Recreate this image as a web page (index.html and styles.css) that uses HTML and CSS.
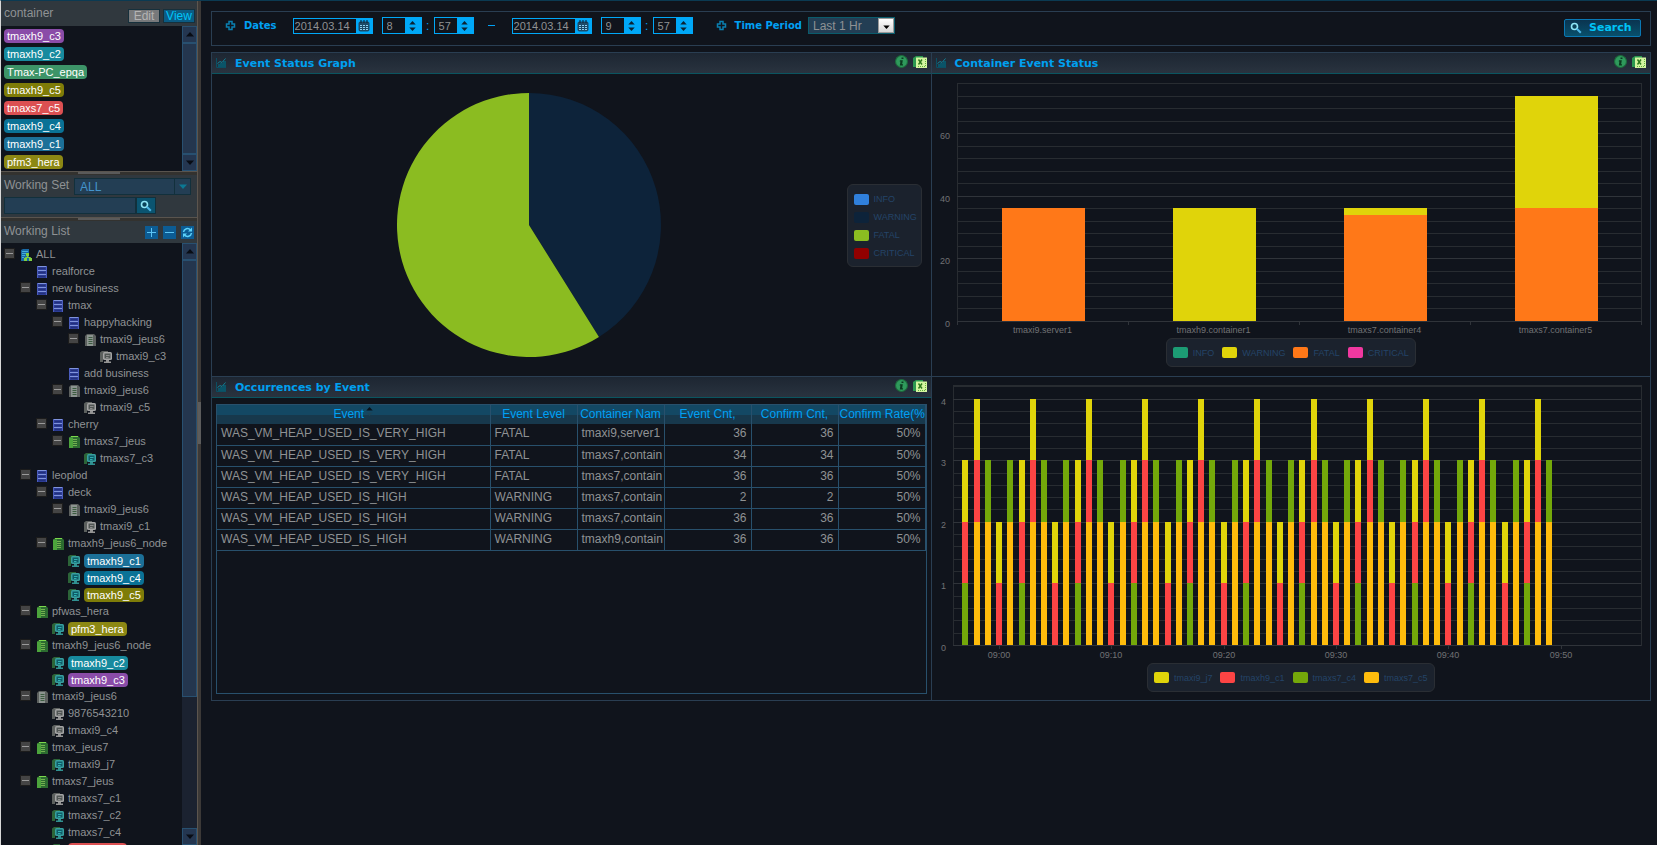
FILE: index.html
```html
<!DOCTYPE html>
<html lang="en">
<head>
<meta charset="UTF-8">
<title>Event Status</title>
<meta name="viewport" content="width=device-width, initial-scale=1.0">
<link rel="stylesheet" href="styles.css">
</head>
<body>

<svg class="sprite" aria-hidden="true">
    <symbol id="i-plus" viewBox="0 0 11 11"><path d="M4 1.500h3V4h2.500v3H7v2.500H4V7H1.500V4H4z" fill="none" stroke="#0a7fb0" stroke-width="1.500"/></symbol>
    <symbol id="i-cal" viewBox="0 0 12 12"><rect x="0.500" y="1.500" width="11" height="10" rx="2" fill="#1c4a68"/><path d="M3 0v3M6 0v3M9 0v3" stroke="#0b1f30"/><path d="M2 5h2v1H2zM5 5h2v1H5zM8 5h2v1H8zM2 7h2v1H2zM5 7h2v1H5zM8 7h2v1H8zM2 9h2v1H2zM5 9h2v1H5zM8 9h2v1H8z" fill="#8fd0f0"/></symbol>
    <symbol id="i-up" viewBox="0 0 8 5"><path d="M4 0l4 4.500H0z" fill="currentColor"/></symbol>
    <symbol id="i-down" viewBox="0 0 8 5"><path d="M0 .5h8L4 5z" fill="currentColor"/></symbol>
    <symbol id="i-chart" viewBox="0 0 10 10"><path d="M.5 0v9.500H10" fill="none" stroke="#0b4f63"/><path d="M2 6h2v3H2zM4 5h3v4H4zM7 3h3v6H7z" fill="#0a5468"/><path d="M1.500 5.500l2.500-2 2 1L9.500.5" fill="none" stroke="#128096"/></symbol>
    <symbol id="i-info" viewBox="0 0 12 12"><circle cx="6" cy="6" r="5.500" fill="#2f9a5c" stroke="#1d6a3c"/><path d="M6 2.200h1.800v1.600H6zM4.600 4.800h2.600L6.600 8.600h.8v1H4.400l.6-3.600h-.7z" fill="#0b3a20"/></symbol>
    <symbol id="i-xls" viewBox="0 0 14 12"><path d="M0 2l3-2h7v2H3v9H0z" fill="#2c9850"/><rect x="3" y="1.500" width="11" height="10.500" fill="#d4f5a0"/><path d="M5.500 3.500l3.500 5M9 3.500l-3.500 5" stroke="#2c7a1c" stroke-width="1.400"/><path d="M12.500 3v8M5 10.500h8" stroke="#5fae3c" stroke-dasharray="1 1"/></symbol>
    <symbol id="i-lens" viewBox="0 0 12 12"><circle cx="4.500" cy="4.500" r="3" fill="#0a4158" stroke="#8fe6f6" stroke-width="1.600"/><path d="M6.800 6.800l4 4" stroke="#4cb4e4" stroke-width="2"/></symbol>
    <symbol id="i-add" viewBox="0 0 13 13"><path d="M6.500 2v9M2 6.500h9" stroke="#5cc4f4"/></symbol>
    <symbol id="i-sub" viewBox="0 0 13 13"><path d="M2 6.500h9" stroke="#5cc4f4"/></symbol>
    <symbol id="i-sync" viewBox="0 0 13 13"><path d="M2.500 6a4 4 0 0 1 7-2M10.500 7a4 4 0 0 1-7 2" fill="none" stroke="#5cd0f8" stroke-width="1.600"/><path d="M11 1.500v4H7zM2 11.500v-4h4z" fill="#5cd0f8"/></symbol>
    <symbol id="i-all" viewBox="0 0 12 12"><path d="M1 1l2-1h6v12H1z" fill="#1868a4"/><path d="M2 2.500h6M2 4.500h4M2 6.500h3M2 8.500h2" stroke="#43aeda"/><path d="M6 4h3v3H6zM4 9h3v3H4zM9 9h3v3H9z" fill="#7fd040"/><path d="M7.500 7v2M5.500 9V8.500h5V9" fill="none" stroke="#7fd040"/></symbol>
    <symbol id="i-biz" viewBox="0 0 12 12"><rect x="1" y="0" width="10" height="12" rx="1" fill="#2c3c94"/><path d="M1.500 0v12M10.500 0v12" stroke="#4a5cbc"/><path d="M3 2.500h6M3 6.500h6M3 10.500h6" stroke="#22307c"/><path d="M2 .5h8M2 4.500h8M2 8.500h8" stroke="#8094dc"/></symbol>
    <symbol id="i-srv-off" viewBox="0 0 12 12"><path d="M1 2l2-2h7l2 2v10H1z" fill="#5c605e"/><rect x="3" y="1" width="6" height="11" fill="#8c9490"/><path d="M4.500 3.500h4M4.500 5.500h4M4.500 7.500h4M4.500 9.500h4" stroke="#3c5c40"/></symbol>
    <symbol id="i-srv-on" viewBox="0 0 12 12"><path d="M1 2l2-2h7l2 2v10H1z" fill="#2c6c30"/><rect x="1" y="1.500" width="4" height="10.500" fill="#4ca43c"/><path d="M3 .5h7" stroke="#7cd84c"/><path d="M5 3.500h4M5 5.500h4M5 7.500h4M5 9.500h4" stroke="#74b050"/></symbol>
    <symbol id="i-node-off" viewBox="0 0 12 12"><path d="M0 1.500L2 0h6v2H3v9H0z" fill="#5c605e"/><rect x="3" y="1" width="9" height="8" rx="1.500" fill="#a4a4a4"/><rect x="4.500" y="2.500" width="6" height="5" fill="#505654"/><path d="M6 4.500h3.500M6 6.500h2.500" stroke="#8c8c8c"/><path d="M6 9h3v1.500H6zM4 10.500h7V12H4z" fill="#949494"/></symbol>
    <symbol id="i-node-on" viewBox="0 0 12 12"><path d="M0 1.500L2 0h6v2H3v9H0z" fill="#2c6438"/><rect x="3" y="1" width="9" height="8" rx="1.500" fill="#38a0a0"/><rect x="4.500" y="2.500" width="6" height="5" fill="#0f5c68"/><path d="M6 4.500h3.500M6 6.500h2.500" stroke="#30b0b0"/><path d="M6 9h3v1.500H6zM4 10.500h7V12H4z" fill="#309090"/></symbol>
</svg>

<aside class="sidebar">
    <div class="side-head">
        <span>container</span>
        <div class="head-btns">
            <button class="tab-btn edit">Edit</button>
            <button class="tab-btn view">View</button>
        </div>
    </div>
    <div class="side-list">
        <ul class="containers">
            <li><span class="pill purple">tmaxh9_c3</span></li>
            <li><span class="pill teal">tmaxh9_c2</span></li>
            <li><span class="pill green">Tmax-PC_epqa</span></li>
            <li><span class="pill olive">tmaxh9_c5</span></li>
            <li><span class="pill red">tmaxs7_c5</span></li>
            <li><span class="pill blue">tmaxh9_c4</span></li>
            <li><span class="pill steel">tmaxh9_c1</span></li>
            <li><span class="pill moss">pfm3_hera</span></li>
        </ul>
        <div class="scroll">
            <button aria-label="Scroll up"><svg><use href="#i-up"/></svg></button>
            <div class="thumb full"></div>
            <button aria-label="Scroll down"><svg><use href="#i-down"/></svg></button>
        </div>
    </div>
    <div class="split-h"><i></i></div>
    <div class="side-set">
        <div class="set-row">
            <label for="workingSet">Working Set</label>
            <div class="set-select">
                <select id="workingSet"><option>ALL</option></select>
                <span class="set-arrow"><svg><use href="#i-down"/></svg></span>
            </div>
        </div>
        <div class="set-find">
            <input type="text" id="findText" aria-label="Find">
            <button aria-label="Find"><svg><use href="#i-lens"/></svg></button>
        </div>
    </div>
    <div class="split-h"><i></i></div>
    <div class="side-head list-head">
        <span>Working List</span>
        <div class="head-btns tools">
            <button aria-label="Expand all"><svg><use href="#i-add"/></svg></button>
            <button aria-label="Collapse all"><svg><use href="#i-sub"/></svg></button>
            <button aria-label="Refresh"><svg><use href="#i-sync"/></svg></button>
        </div>
    </div>
    <div class="side-tree">
        <ul class="tree" id="tree"></ul>
        <div class="scroll">
            <button aria-label="Scroll up"><svg><use href="#i-up"/></svg></button>
            <div class="track"><div class="thumb"></div></div>
            <button aria-label="Scroll down"><svg><use href="#i-down"/></svg></button>
        </div>
    </div>
</aside>
<div class="split-v"><i></i></div>

<main class="main">
    <form class="filter" onsubmit="return false">
        <div class="filter-group">
            <svg class="plus"><use href="#i-plus"/></svg>
            <label class="filter-label" for="dateFrom">Dates</label>
            <div class="range">
                <div class="date"><input type="text" id="dateFrom" value="2014.03.14"><button type="button" aria-label="Pick start date"><svg><use href="#i-cal"/></svg></button></div>
                <div class="time">
                    <div class="spin"><input type="text" aria-label="Start hour" value="8"><button type="button" aria-label="Change start hour"><svg><use href="#i-up"/></svg><svg><use href="#i-down"/></svg></button></div>
                    <span>:</span>
                    <div class="spin"><input type="text" aria-label="Start minute" value="57"><button type="button" aria-label="Change start minute"><svg><use href="#i-up"/></svg><svg><use href="#i-down"/></svg></button></div>
                </div>
            </div>
            <span class="dash"></span>
            <div class="range">
                <div class="date"><input type="text" aria-label="End date" value="2014.03.14"><button type="button" aria-label="Pick end date"><svg><use href="#i-cal"/></svg></button></div>
                <div class="time">
                    <div class="spin"><input type="text" aria-label="End hour" value="9"><button type="button" aria-label="Change end hour"><svg><use href="#i-up"/></svg><svg><use href="#i-down"/></svg></button></div>
                    <span>:</span>
                    <div class="spin"><input type="text" aria-label="End minute" value="57"><button type="button" aria-label="Change end minute"><svg><use href="#i-up"/></svg><svg><use href="#i-down"/></svg></button></div>
                </div>
            </div>
        </div>
        <div class="filter-group">
            <svg class="plus"><use href="#i-plus"/></svg>
            <label class="filter-label" for="period">Time Period</label>
            <div class="period">
                <select id="period"><option>Last 1 Hr</option></select>
                <span class="period-arrow"><svg><use href="#i-down"/></svg></span>
            </div>
        </div>
        <button class="search-btn"><svg><use href="#i-lens"/></svg>Search</button>
    </form>

    <div class="board">
        <section class="panel">
            <div class="panel-head">
                <svg class="chart-icon"><use href="#i-chart"/></svg>
                <h2>Event Status Graph</h2>
                <button aria-label="Info"><svg class="info"><use href="#i-info"/></svg></button>
                <button aria-label="Export"><svg class="xls"><use href="#i-xls"/></svg></button>
            </div>
            <div class="pie-body">
                <div class="pie-area">
                    <svg class="pie" viewBox="0 0 266 266" id="pie"></svg>
                </div>
                <ul class="legend vertical">
                    <li><i class="c-info"></i>INFO</li>
                    <li><i class="c-navy"></i>WARNING</li>
                    <li><i class="c-lime"></i>FATAL</li>
                    <li><i class="c-crimson"></i>CRITICAL</li>
                </ul>
            </div>
        </section>

        <section class="panel">
            <div class="panel-head">
                <svg class="chart-icon"><use href="#i-chart"/></svg>
                <h2>Container Event Status</h2>
                <button aria-label="Info"><svg class="info"><use href="#i-info"/></svg></button>
                <button aria-label="Export"><svg class="xls"><use href="#i-xls"/></svg></button>
            </div>
            <svg class="chart bars" id="barChart"></svg>
            <ul class="legend">
                <li><i class="c-jade"></i>INFO</li>
                <li><i class="c-yellow"></i>WARNING</li>
                <li><i class="c-orange"></i>FATAL</li>
                <li><i class="c-pink"></i>CRITICAL</li>
            </ul>
        </section>

        <section class="panel">
            <div class="panel-head">
                <svg class="chart-icon"><use href="#i-chart"/></svg>
                <h2>Occurrences by Event</h2>
                <button aria-label="Info"><svg class="info"><use href="#i-info"/></svg></button>
                <button aria-label="Export"><svg class="xls"><use href="#i-xls"/></svg></button>
            </div>
            <div class="table-box">
                <table>
                    <colgroup><col><col class="w"><col class="w"><col class="w"><col class="w"><col class="w"></colgroup>
                    <thead>
                        <tr>
                            <th>Event<span class="sort"><svg><use href="#i-up"/></svg><svg><use href="#i-down"/></svg></span></th>
                            <th>Event Level</th>
                            <th>Container Nam</th>
                            <th>Event Cnt,</th>
                            <th>Confirm Cnt,</th>
                            <th>Confirm Rate(%</th>
                        </tr>
                    </thead>
                    <tbody>
                        <tr><td>WAS_VM_HEAP_USED_IS_VERY_HIGH</td><td>FATAL</td><td>tmaxi9,server1</td><td>36</td><td>36</td><td>50%</td></tr>
                        <tr><td>WAS_VM_HEAP_USED_IS_VERY_HIGH</td><td>FATAL</td><td>tmaxs7,contain</td><td>34</td><td>34</td><td>50%</td></tr>
                        <tr><td>WAS_VM_HEAP_USED_IS_VERY_HIGH</td><td>FATAL</td><td>tmaxs7,contain</td><td>36</td><td>36</td><td>50%</td></tr>
                        <tr><td>WAS_VM_HEAP_USED_IS_HIGH</td><td>WARNING</td><td>tmaxs7,contain</td><td>2</td><td>2</td><td>50%</td></tr>
                        <tr><td>WAS_VM_HEAP_USED_IS_HIGH</td><td>WARNING</td><td>tmaxs7,contain</td><td>36</td><td>36</td><td>50%</td></tr>
                        <tr><td>WAS_VM_HEAP_USED_IS_HIGH</td><td>WARNING</td><td>tmaxh9,contain</td><td>36</td><td>36</td><td>50%</td></tr>
                    </tbody>
                </table>
            </div>
        </section>

        <section class="panel">
            <svg class="chart times" id="timeChart"></svg>
            <ul class="legend">
                <li><i class="c-yellow"></i>tmaxi9_j7</li>
                <li><i class="c-red"></i>tmaxh9_c1</li>
                <li><i class="c-green"></i>tmaxs7_c4</li>
                <li><i class="c-amber"></i>tmaxs7_c5</li>
            </ul>
        </section>
    </div>
</main>

<script src="script.js"></script>
</body>
</html>
```
FILE: styles.css
```css
* { box-sizing: border-box; }
body { margin: 0; height: 100vh; overflow: hidden; display: flex; background: #10141c; color: #8f9294; font-family: "Liberation Sans", Arial, sans-serif; font-size: 12px; border-top: 1px solid #0b3a52; border-left: 1px solid #d8d8d8; }
ul { list-style: none; margin: 0; padding: 0; }
button, input, select { font-family: inherit; font-size: inherit; color: inherit; margin: 0; padding: 0; border: none; border-radius: 0; background: none; outline: none; }
button { cursor: pointer; }
select { appearance: none; }
svg { display: block; flex: none; }
.sprite { position: absolute; width: 0; height: 0; }

/* sidebar */
.sidebar { width: 196px; flex: none; display: flex; flex-direction: column; }
.side-head { height: 25px; flex: none; display: flex; align-items: center; justify-content: space-between; padding: 0 2px 2px 3px; background: #30383e; }
.head-btns { display: flex; gap: 3px; align-self: flex-end; padding-bottom: 1px; }
.tab-btn { height: 14px; width: 32px; line-height: 12px; border: 1px solid #16303c; }
.tab-btn.edit { background: #77797b; color: #b4b4b4; }
.tab-btn.view { background: #0b5c84; color: #00c4f8; }
.side-list { height: 145px; flex: none; display: flex; justify-content: space-between; }
.containers { padding: 3px; }
.containers li { height: 18px; display: flex; align-items: flex-start; }
.pill { height: 14px; line-height: 14px; padding: 0 3px; border-radius: 4px; font-size: 11px; color: #fff; }
.purple { background: #8a4ca8; }
.teal { background: #178a9e; }
.green { background: #3d9468; }
.olive { background: #7e7c08; }
.red { background: #dc5052; }
.blue { background: #0a7296; }
.steel { background: #1c7098; }
.moss { background: #8c8814; }

.scroll { width: 15px; flex: none; display: flex; flex-direction: column; background: #1b2230; }
.scroll button { height: 17px; flex: none; display: flex; align-items: center; justify-content: center; background: #243650; border: 1px solid #285070; color: #080c14; }
.scroll svg { width: 8px; height: 5px; }
.thumb { background: #24364e; border: 1px solid #285070; }
.thumb.full { flex: 1; }
.track { flex: 1; }
.track .thumb { height: 77%; }

.split-h { height: 4px; flex: none; display: flex; justify-content: center; background: #33322f; border-top: 1px solid #59544e; }
.split-h i { width: 42px; height: 2px; background: #5a5a5a; }
.split-v { width: 4px; flex: none; display: flex; align-items: center; background: #3c3937; border-left: 1px solid #5c554e; }
.split-v i { width: 3px; height: 42px; background: #5c5c5c; }

.side-set { height: 42px; flex: none; background: #30383e; padding: 3px; }
.set-row { display: flex; align-items: flex-start; gap: 3px; height: 17px; }
.set-row label { width: 67px; white-space: nowrap; }
.set-select { position: relative; flex: none; width: 117px; height: 17px; background: #233e54; border: 1px solid #12303c; }
.set-select select { width: 100%; height: 15px; padding-left: 5px; color: #4494cc; }
.set-arrow { position: absolute; right: 0; top: 0; width: 16px; height: 15px; display: flex; align-items: center; justify-content: center; border-left: 1px solid #12303c; color: #0c7894; pointer-events: none; }
.set-arrow svg { width: 8px; height: 5px; }
.set-find { display: flex; height: 17px; margin-top: 2px; }
.set-find input { width: 132px; background: #233e54; border: 1px solid #12303c; }
.set-find button { width: 20px; display: flex; align-items: center; justify-content: center; background: #0b5470; border: 1px solid #12303c; }
.set-find svg { width: 12px; height: 12px; }

.list-head { height: 22px; padding-right: 3px; }
.list-head .tools { gap: 5px; padding-bottom: 2px; }
.tools button { width: 13px; height: 13px; background: #0c5c94; border: none; }
.tools svg { width: 13px; height: 13px; }

.side-tree { flex: 1; min-height: 0; display: flex; }
.tree { flex: 1; min-width: 0; overflow: hidden; padding-top: 2px; font-size: 11px; }
.tree ul { padding-left: 16px; }
.row { height: 17px; display: flex; align-items: center; padding-left: 3px; white-space: nowrap; }
.toggle { width: 11px; height: 11px; flex: none; display: flex; align-items: center; justify-content: center; background: #444; border: 1px solid #1c1c1c; }
.toggle::before { content: ""; width: 7px; height: 1px; background: #9a9a9a; }
.no-toggle { width: 11px; flex: none; }
.row svg { width: 12px; height: 12px; margin: 2px 4px 0 5px; }
.row .pill { margin-top: 2px; }

/* main */
.main { flex: 1; min-width: 0; padding: 10px 6px 0 10px; }
.filter { height: 35px; display: flex; align-items: center; gap: 23px; padding: 0 9px 6px 13px; border: 1px solid #2a3e52; }
.filter-group { display: flex; align-items: center; }
.plus { width: 11px; height: 11px; }
.filter-label { margin: 0 6px 0 8px; font: bold 10px "DejaVu Sans", sans-serif; color: #00a0f4; white-space: nowrap; }
.filter-label + .range { margin-left: 10px; }
.range, .time { display: flex; align-items: center; }
.range { gap: 9px; }
.time span { width: 12px; text-align: center; color: #00a0f4; }
.date, .spin { display: flex; border: 1px solid #00a8f8; font-size: 11px; }
.date { height: 16px; }
.date input { width: 62px; padding-left: 1px; }
.date button { width: 16px; background: #00a8f8; display: flex; align-items: center; justify-content: center; }
.date svg { width: 12px; height: 12px; }
.spin { height: 17px; }
.spin input { width: 22px; padding-left: 4px; }
.spin button { width: 16px; background: #00a8f8; display: flex; flex-direction: column; align-items: center; justify-content: center; gap: 2px; color: #0b2232; }
.spin svg { width: 7px; height: 4px; }
.dash { width: 7px; height: 1px; margin: 0 17px 0 14px; background: #00a0f4; }
.period { position: relative; width: 87px; height: 17px; background: #233e54; border: 1px solid #0a5c6c; }
.period select { width: 100%; height: 15px; padding-left: 4px; }
.period-arrow { position: absolute; right: 0; top: 0; width: 16px; height: 15px; display: flex; align-items: flex-end; justify-content: center; padding-bottom: 3px; background: linear-gradient(#fff, #d8d8d8); border: 1px solid #9a9a9a; color: #000; pointer-events: none; }
.period-arrow svg { width: 7px; height: 4px; }
.search-btn { margin-left: auto; margin-top: 4px; width: 77px; height: 18px; display: flex; align-items: center; gap: 7px; padding-left: 5px; background: linear-gradient(#0a3450, #08506c); border: 1px solid #0a78b4; border-radius: 2px; color: #00c4f8; font: bold 11px "DejaVu Sans", sans-serif; }
.search-btn svg { width: 12px; height: 12px; }

.board { margin-top: 6px; display: grid; grid-template-columns: 1fr 1fr; border: 1px solid #2a3e52; border-bottom: none; border-right: none; }
.panel { min-width: 0; height: 324px; border-right: 1px solid #2a3e52; border-bottom: 1px solid #2a3e52; display: flex; flex-direction: column; align-items: center; }
.panel-head { width: 100%; height: 21px; flex: none; display: flex; align-items: center; padding: 0 4px; background: linear-gradient(#1d2632, #29333f); border-bottom: 1px solid #0a5560; }
.panel-head h2 { flex: 1; margin: 0 0 0 9px; font: bold 11px "DejaVu Sans", sans-serif; color: #00a0f0; }
.panel-head button { margin: 0 0 3px 5px; }
.chart-icon { width: 10px; height: 10px; }
.info { width: 13px; height: 13px; }
.xls { width: 14px; height: 12px; }

.pie-body { width: 100%; flex: 1; display: flex; align-items: center; padding-right: 9px; }
.pie-area { flex: 1; display: flex; justify-content: center; }
.pie { width: 266px; height: 266px; }

.chart { width: 100%; }
.bars { height: 264px; }
.times { height: 286px; }
.chart text { font-size: 9px; fill: #707274; }
.chart line, .chart .frame { stroke: #282c31; fill: none; shape-rendering: crispEdges; }
.chart .major { stroke: #30343a; }
.chart .bar { shape-rendering: crispEdges; }

.legend { height: 29px; display: flex; align-items: center; gap: 8px; padding: 0 6px; background: #1b222d; border: 1px solid #2a2e34; border-radius: 6px; font-size: 9px; color: #244468; }
.legend li { display: flex; align-items: center; gap: 5px; }
.legend i { width: 15px; height: 11px; border-radius: 2px; }
.legend.vertical { width: 75px; height: 83px; flex-direction: column; align-items: flex-start; justify-content: center; gap: 7px; padding-top: 2px; }
.legend.vertical li { height: 11px; }
.c-info { background: #3080dc; }
.c-navy { background: #0d233a; }
.c-lime { background: #8bbc21; }
.c-crimson { background: #910000; }
.c-jade { background: #1c9c74; }
.c-yellow { background: #e0d40a; }
.c-orange { background: #ff7818; }
.c-pink { background: #f038a0; }
.c-red { background: #fc4444; }
.c-green { background: #74a80a; }
.c-amber { background: #ffbc0c; }

.table-box { align-self: stretch; flex: 1; margin: 6px 4px; border: 1px solid #28506c; }
table { width: 100%; table-layout: fixed; border-collapse: collapse; }
.w { width: 87px; }
th, td { height: 21px; padding: 0 4px 2px; border-right: 1px solid #28506c; border-bottom: 1px solid #28506c; white-space: nowrap; overflow: hidden; text-align: left; }
thead tr { background: linear-gradient(#134864 50%, #17384c 50%); }
th { height: 19px; padding: 0 1px 2px; border-bottom: none; font-weight: normal; color: #00a0f4; text-align: center; }
td:nth-child(n+4) { text-align: right; }
.sort { display: inline-flex; flex-direction: column; gap: 1px; margin-left: 2px; vertical-align: top; color: #08121c; }
.sort svg { width: 7px; height: 4px; }
.sort svg + svg { color: #1c4458; }
```
FILE: script.js
```js
const treeData = ["ALL", "all", [
    ["realforce", "biz"],
    ["new business", "biz", [
        ["tmax", "biz", [
            ["happyhacking", "biz", [
                ["tmaxi9_jeus6", "srv-off", [["tmaxi9_c3", "node-off"]]]
            ]],
            ["add business", "biz"],
            ["tmaxi9_jeus6", "srv-off", [["tmaxi9_c5", "node-off"]]]
        ]],
        ["cherry", "biz", [
            ["tmaxs7_jeus", "srv-on", [["tmaxs7_c3", "node-on"]]]
        ]]
    ]],
    ["leoplod", "biz", [
        ["deck", "biz", [
            ["tmaxi9_jeus6", "srv-off", [["tmaxi9_c1", "node-off"]]]
        ]],
        ["tmaxh9_jeus6_node", "srv-on", [
            ["tmaxh9_c1", "node-on", null, "steel"],
            ["tmaxh9_c4", "node-on", null, "blue"],
            ["tmaxh9_c5", "node-on", null, "olive"]
        ]]
    ]],
    ["pfwas_hera", "srv-on", [["pfm3_hera", "node-on", null, "moss"]]],
    ["tmaxh9_jeus6_node", "srv-on", [
        ["tmaxh9_c2", "node-on", null, "teal"],
        ["tmaxh9_c3", "node-on", null, "purple"]
    ]],
    ["tmaxi9_jeus6", "srv-off", [["9876543210", "node-off"], ["tmaxi9_c4", "node-off"]]],
    ["tmax_jeus7", "srv-on", [["tmaxi9_j7", "node-on"]]],
    ["tmaxs7_jeus", "srv-on", [
        ["tmaxs7_c1", "node-off"],
        ["tmaxs7_c2", "node-on"],
        ["tmaxs7_c4", "node-on"],
        ["tmaxs7_c5", "node-on", null, "red"]
    ]]
]];

function treeItem(item){
    const [name, icon, children, color] = item;
    let html = '<li><div class="row">';
    html += children ? '<button class="toggle" aria-label="Toggle ' + name + '"></button>' : '<span class="no-toggle"></span>';
    html += '<svg><use href="#i-' + icon + '"/></svg>';
    html += '<span class="' + (color ? "pill " + color : "") + '">' + name + '</span></div>';
    if(children){ html += "<ul>" + children.map(treeItem).join("") + "</ul>"; }
    return html + "</li>";
}

const tree = document.getElementById("tree");
tree.innerHTML = treeItem(treeData);
tree.addEventListener("click", function(e){
    if(!e.target.classList.contains("toggle")) return;
    const list = e.target.closest("li").querySelector("ul");
    list.hidden = !list.hidden;
});

const colors = {
    yellow: "#e0d40a", orange: "#ff7818", red: "#fc4444", green: "#74a80a", amber: "#ffbc0c"
};

function line(x1, y1, x2, y2, cls){
    return '<line x1="' + x1 + '" y1="' + y1 + '" x2="' + x2 + '" y2="' + y2 + '" class="' + (cls || "") + '"/>';
}
function text(x, y, anchor, value){
    return '<text x="' + x + '" y="' + y + '" text-anchor="' + anchor + '">' + value + '</text>';
}
function stack(x, width, bottom, unit, parts){
    let html = "", sum = 0;
    parts.forEach(([color, value]) => {
        const top = Math.round(bottom - (sum + value) * unit);
        const low = Math.round(bottom - sum * unit);
        html += '<rect class="bar" x="' + Math.round(x) + '" y="' + top + '" width="' + width + '" height="' + (low - top) + '" fill="' + colors[color] + '"/>';
        sum += value;
    });
    return html;
}
function grid(left, right, top, bottom, unit, step, major){
    let html = '<rect class="frame" x="' + left + '" y="' + top + '" width="' + (right - left) + '" height="' + (bottom - top) + '"/>';
    for(let i = 0; bottom - i * step * unit > top; i++){
        const y = Math.round(bottom - i * step * unit);
        html += line(left, y, right, y, i % 5 ? "" : "major");
        if(i % 5 === 0){ html += text(left - 7, y + 6, "end", i / 5 * major); }
    }
    return html;
}

function drawPie(){
    const share = 74 / 180, r = 132, c = 133;
    const a = share * Math.PI * 2;
    const x = c + r * Math.sin(a), y = c - r * Math.cos(a);
    document.getElementById("pie").innerHTML =
        '<path fill="#0d233a" d="M' + c + ' ' + c + 'V' + (c - r) + 'A' + r + ' ' + r + ' 0 0 1 ' + x + ' ' + y + 'z"/>' +
        '<path fill="#8bbc21" d="M' + c + ' ' + c + 'L' + x + ' ' + y + 'A' + r + ' ' + r + ' 0 1 1 ' + c + ' ' + (c - r) + 'z"/>';
}

function drawBars(){
    const svg = document.getElementById("barChart");
    const left = 25, right = svg.clientWidth - 10, top = 9, bottom = 247, unit = (bottom - top) / 76;
    const data = [
        ["tmaxi9.server1", [["orange", 36]]],
        ["tmaxh9.container1", [["yellow", 36]]],
        ["tmaxs7.container4", [["orange", 34], ["yellow", 2]]],
        ["tmaxs7.container5", [["orange", 36], ["yellow", 36]]]
    ];
    const slot = (right - left) / data.length;
    let html = grid(left, right, top, bottom, unit, 4, 20);
    data.forEach(([name, parts], i) => {
        const mid = left + slot * (i + 0.5);
        html += stack(mid - 41, 83, bottom, unit, parts);
        html += text(mid, bottom + 12, "middle", name);
        html += line(left + slot * i, bottom, left + slot * i, bottom + 4, "major");
    });
    html += line(right, bottom, right, bottom + 4, "major");
    svg.innerHTML = html;
}

function drawTimes(){
    const svg = document.getElementById("timeChart");
    const left = 21, right = svg.clientWidth - 10, top = 8, bottom = 268, unit = 61.6;
    const minute = (right - left) / 61.25, zero = left + minute * 4.1;
    const pattern = [
        [["green", 1], ["red", 1], ["yellow", 1]],
        [["amber", 2], ["red", 1], ["yellow", 1]],
        [["amber", 2], ["green", 1]],
        [["red", 1], ["yellow", 1]],
        [["amber", 2], ["green", 1]]
    ];
    let html = grid(left, right, top, bottom, unit, 0.2, 1);
    for(let i = 0; i < 53; i++){
        html += stack(zero + (i - 3) * minute - 3, 6, bottom, unit, pattern[i % 5]);
    }
    for(let t = 0; t <= 50; t += 10){
        const x = Math.round(zero + t * minute);
        html += line(x, bottom, x, bottom + 4, "major");
        html += text(x, bottom + 13, "middle", "09:" + String(t).padStart(2, "0"));
    }
    svg.innerHTML = html;
}

function draw(){
    drawBars();
    drawTimes();
}
drawPie();
draw();
window.addEventListener("resize", draw);
```
